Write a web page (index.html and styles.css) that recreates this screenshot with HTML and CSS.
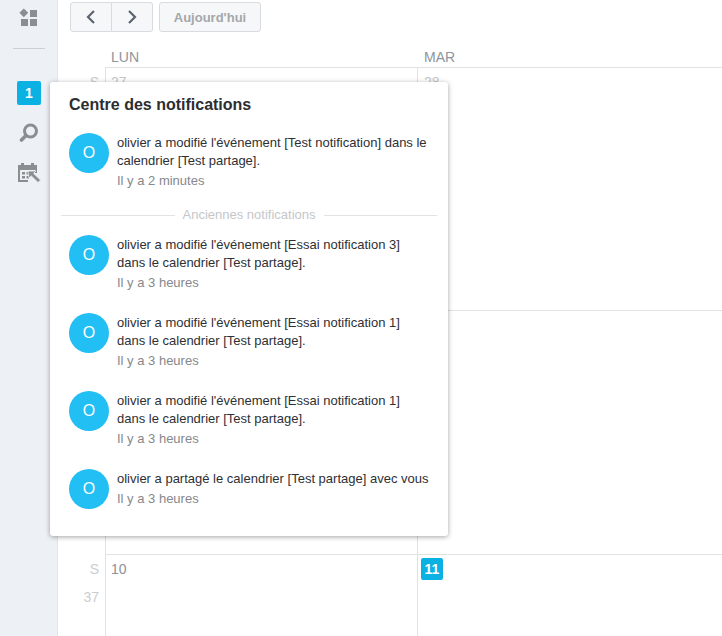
FILE: index.html
```html
<!DOCTYPE html>
<html lang="fr">
<head>
<meta charset="utf-8">
<title>Calendrier</title>
<link rel="stylesheet" href="styles.css">
</head>
<body>
<div class="app">
  <nav class="sidebar">
    <svg class="icon-apps" width="20" height="19" viewBox="0 0 20 19"><path d="M4.800 .4 9.200 4.800 4.800 9.200 .4 4.800Z"/><rect x="11" y="2" width="7" height="7"/><rect x="2" y="11" width="7" height="7"/><rect x="11" y="11" width="7" height="7"/></svg>
    <div class="side-rule"></div>
    <div class="badge-count">1</div>
    <svg class="icon-search" width="20" height="20" viewBox="0 0 20 20"><circle cx="11.500" cy="8" r="6" fill="none" stroke="#8b8e91" stroke-width="3"/><path d="M7 12.500 2.500 17" stroke="#8b8e91" stroke-width="3.600" stroke-linecap="round"/></svg>
    <svg class="icon-cal" width="24" height="22" viewBox="0 0 24 22"><path fill="#8b8e91" fill-rule="evenodd" d="M1 3h3V1h3v2h7V1h3v2h3v8h-2V8H3v10h8v2H1ZM5 10h3v2.500H5Zm4.500 0H12v2.500H9.500ZM5 14h3v2.500H5Zm4.500 0H12v2.500H9.500Z"/><path fill="#8b8e91" d="M11 9h8l-2.400 2.400L23.500 18 21 20.500l-6.700-6.600L12 16Z" stroke="#edf0f5" stroke-width=".8"/></svg>
  </nav>
  <main class="main">
    <div class="toolbar">
      <div class="btn-group">
        <button class="btn btn-nav"><svg width="12" height="16" viewBox="0 0 12 16"><path d="M9 2 3 8l6 6" fill="none" stroke="#5b6470" stroke-width="2.200"/></svg></button>
        <button class="btn btn-nav btn-next"><svg width="12" height="16" viewBox="0 0 12 16"><path d="m3 2 6 6-6 6" fill="none" stroke="#5b6470" stroke-width="2.200"/></svg></button>
      </div>
      <button class="btn btn-today">Aujourd'hui</button>
    </div>
    <div class="calendar">
      <div class="gutter-head"></div>
      <div class="day-head">LUN</div>
      <div class="day-head day-head-mar">MAR</div>

      <div class="week-label"><span>S</span></div>
      <div class="cell cell-first"><span class="date">27</span></div>
      <div class="cell"><span class="date">28</span></div>

      <div class="week-label"></div>
      <div class="cell cell-first"></div>
      <div class="cell"></div>

      <div class="week-label week-last"><span>S</span><span class="week-num">37</span></div>
      <div class="cell cell-first"><span class="date date-dark">10</span></div>
      <div class="cell"><span class="date-today">11</span></div>
    </div>
  </main>

  <section class="popover">
    <h2 class="pop-title">Centre des notifications</h2>
    <div class="notif">
      <div class="avatar">O</div>
      <div class="notif-body">
        <p class="notif-text">olivier a modifié l'événement [Test notification] dans le calendrier [Test partage].</p>
        <p class="notif-time">Il y a 2 minutes</p>
      </div>
    </div>
    <div class="divider">Anciennes notifications</div>
    <div class="notif">
      <div class="avatar">O</div>
      <div class="notif-body">
        <p class="notif-text">olivier a modifié l'événement [Essai notification 3] dans le calendrier [Test partage].</p>
        <p class="notif-time">Il y a 3 heures</p>
      </div>
    </div>
    <div class="notif">
      <div class="avatar">O</div>
      <div class="notif-body">
        <p class="notif-text">olivier a modifié l'événement [Essai notification 1] dans le calendrier [Test partage].</p>
        <p class="notif-time">Il y a 3 heures</p>
      </div>
    </div>
    <div class="notif">
      <div class="avatar">O</div>
      <div class="notif-body">
        <p class="notif-text">olivier a modifié l'événement [Essai notification 1] dans le calendrier [Test partage].</p>
        <p class="notif-time">Il y a 3 heures</p>
      </div>
    </div>
    <div class="notif">
      <div class="avatar">O</div>
      <div class="notif-body">
        <p class="notif-text">olivier a partagé le calendrier [Test partage] avec vous</p>
        <p class="notif-time">Il y a 3 heures</p>
      </div>
    </div>
  </section>
</div>
</body>
</html>
```
FILE: styles.css
```css
* { box-sizing: border-box; }
html, body { margin: 0; height: 100%; overflow: hidden; background: #fff; }
body { font-family: "Liberation Sans", Arial, sans-serif; color: #2d2f33; }
p, h2 { margin: 0; }

.app { position: relative; display: flex; width: 722px; height: 636px; overflow: hidden; }

.sidebar {
  flex: 0 0 58px;
  background: #edf0f5;
  border-right: 1px solid #e3e5e8;
  display: flex;
  flex-direction: column;
  align-items: center;
  padding-top: 8px;
}
.icon-apps { fill: #8b8e91; display: block; margin-left: 1px; }
.side-rule { width: 32px; height: 1px; background: #cdd0d4; margin-top: 21px; }
.badge-count {
  width: 24px; height: 24px; margin-top: 32px; margin-left: 1px;
  background: #0cb1e4; border-radius: 2px; color: #fff;
  font-weight: 700; font-size: 14px; line-height: 24px; text-align: center;
}
.icon-search { display: block; margin-top: 18px; margin-left: 1px; }
.icon-cal { display: block; margin-top: 19px; margin-left: 1px; }

.main { flex: 1; min-width: 0; }
.toolbar { display: flex; gap: 6px; padding: 2px 0 0 12px; height: 48px; }
.btn {
  height: 30px; background: #f6f7f8; border: 1px solid #d9dbde; border-radius: 3px;
  font-family: inherit; padding: 0; display: flex; align-items: center; justify-content: center;
}
.btn-group { display: flex; }
.btn-nav { width: 42px; border-radius: 3px 0 0 3px; }
.btn-next { width: 41px; border-left: 0; border-radius: 0 3px 3px 0; }
.btn-today { width: 102px; font-size: 13px; font-weight: 700; color: #a4a7ab; }

.calendar {
  display: grid;
  grid-template-columns: 47px 313px 1fr;
  grid-template-rows: 19px 243px 244px 90px;
}
.day-head { font-size: 14px; line-height: 19px; color: #8e959d; padding-left: 6px; }
.day-head-mar { padding-left: 6px; }

.week-label {
  display: flex; flex-direction: column; align-items: flex-end; padding: 7px 6px 0 0;
  font-size: 14px; line-height: 16px; color: #cbcdd0;
}
.week-num { margin-top: 12px; }
.cell { border-top: 1px solid #e0e2e4; padding: 6px 0 0 6px; font-size: 14px; line-height: 16px; }
.cell-first { border-left: 1px solid #e0e2e4; border-right: 1px solid #e0e2e4; padding-left: 5px; }
.date { color: #c4c6c9; }
.date-dark { color: #8c9097; }
.date-today {
  display: block; width: 22px; height: 22px; margin: -3px 0 0 -3px;
  background: #0cb1e4; border-radius: 2px; color: #fff;
  font-weight: 700; font-size: 14px; line-height: 22px; text-align: center;
}

.popover {
  position: absolute; left: 50px; top: 82px; width: 398px; height: 454px;
  background: #fff; border-radius: 3px; padding: 12px 11px 0;
  box-shadow: 0 1px 5px rgba(0, 0, 0, .36);
}
.pop-title { font-size: 16px; line-height: 22px; font-weight: 700; color: #2b2d31; padding-left: 8px; margin-bottom: 17px; }
.notif { display: flex; gap: 8px; padding-left: 8px; margin-bottom: 21px; }
.avatar {
  flex: 0 0 40px; width: 40px; height: 40px; border-radius: 50%;
  background: #22bff5; color: #fff; font-size: 16px; line-height: 40px; text-align: center;
}
.notif-body { width: 312px; padding-top: 1px; }
.notif-text { font-size: 13px; line-height: 18px; color: #2e3034; }
.notif-time { font-size: 13px; line-height: 18px; color: #85888c; margin-top: 2px; }
.divider {
  display: flex; align-items: center; gap: 8px; margin: -5px 0 11px;
  font-size: 13px; line-height: 18px; color: #c5c7ca;
}
.divider::before, .divider::after { content: ""; flex: 1; height: 1px; background: #e2e3e5; }
```
